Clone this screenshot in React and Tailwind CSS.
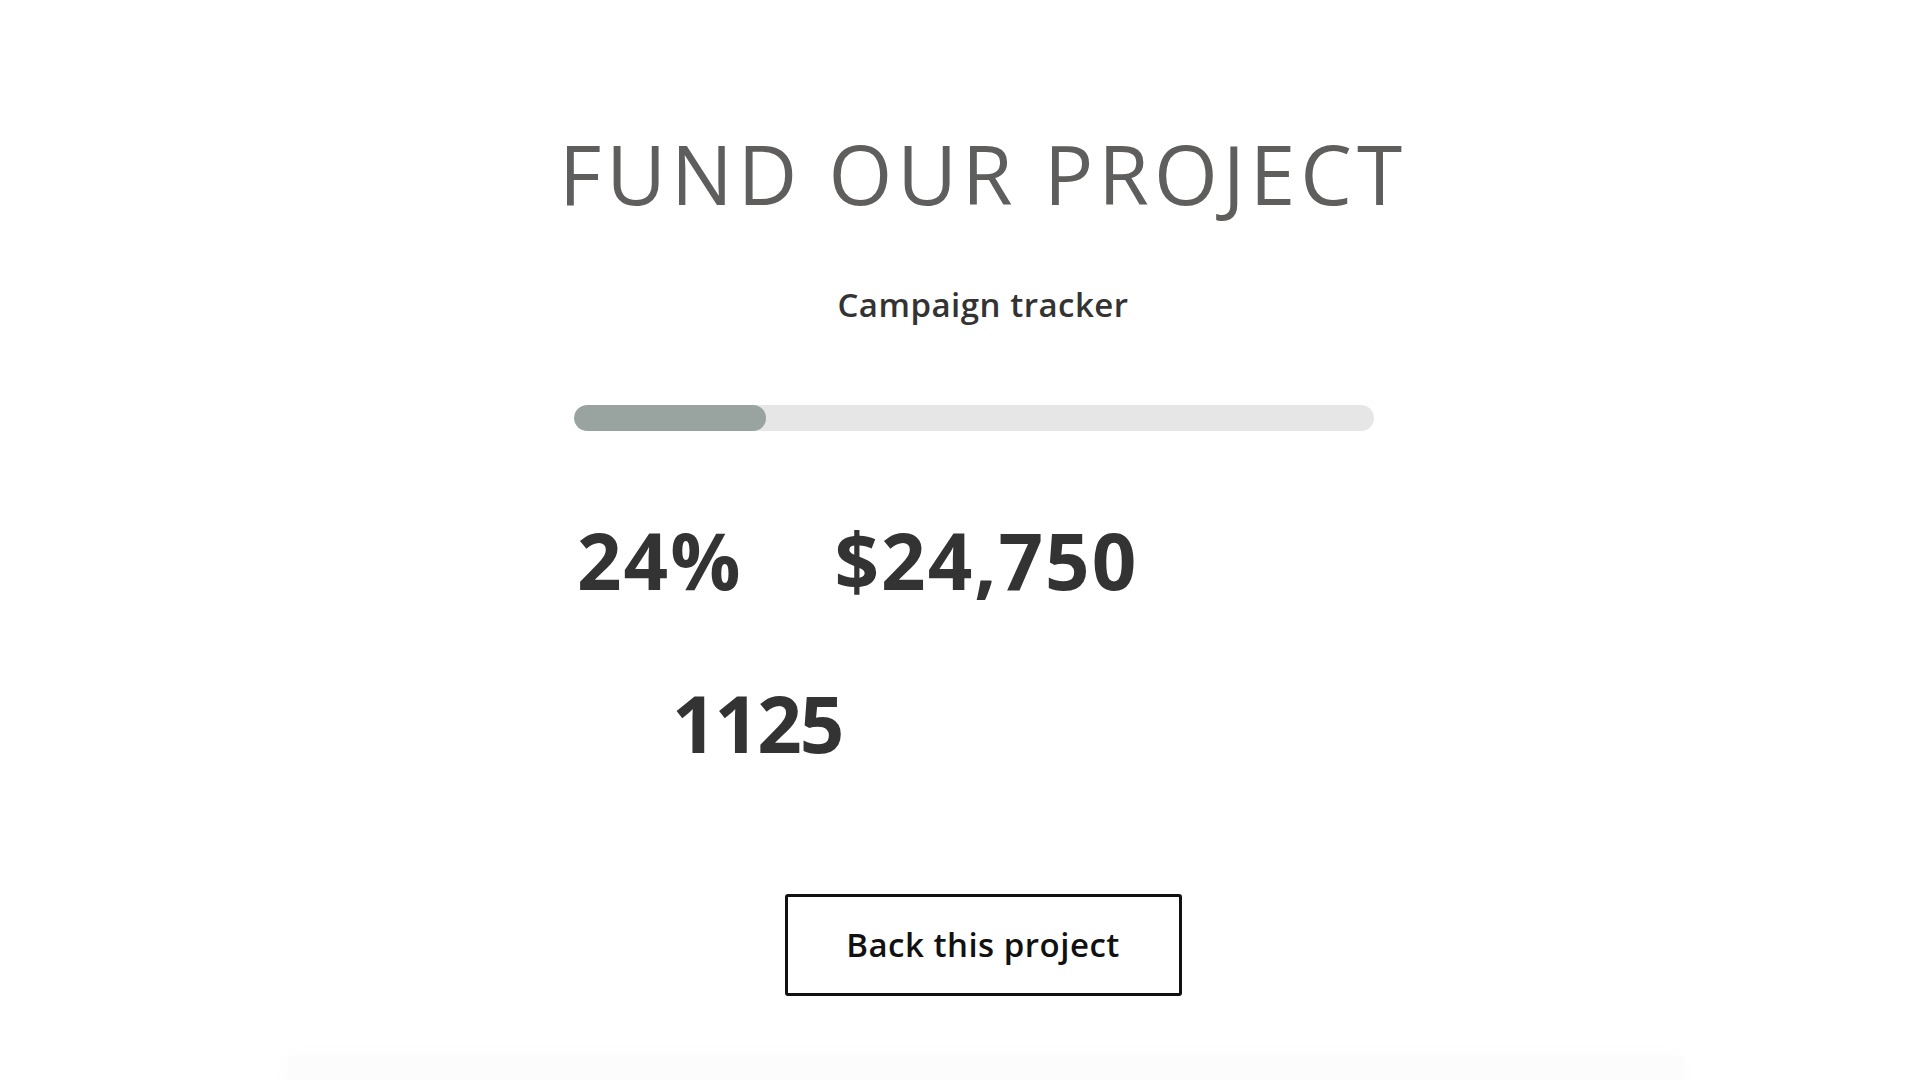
import React from 'react';

const stats = [
    { key: 'percent', value: '24%' },
    { key: 'raised', value: '$24,750' },
];

const ProgressBar = ({ percent }) => (
    <div className="w-[800px] h-[26px] rounded-full bg-[#e6e6e6] overflow-hidden">
        <div className="h-full rounded-full bg-[#99a39f]" style={{ width: `${percent}%` }}></div>
    </div>
);

const App = () => {
    return (
        <div
            className="min-h-screen bg-white flex flex-col items-center pl-[46px] overflow-hidden relative"
            style={{ fontFamily: '"Open Sans", "Liberation Sans", sans-serif' }}
        >
            <h1 className="mt-[128px] text-[82px] leading-[90px] tracking-[5px] text-[#5f5e5c] font-normal">
                FUND OUR PROJECT
            </h1>

            <p className="mt-[67px] text-[33px] leading-[40px] tracking-[0.5px] text-[#333333] font-semibold">
                Campaign tracker
            </p>

            <div className="mt-[80px] mr-[18px]">
                <ProgressBar percent={24} />
                <div className="mt-[84px] flex flex-col text-[#333333]">
                    <div className="flex gap-[92px] pl-[3px]">
                        {stats.map((stat) => (
                            <span key={stat.key} className="text-[78px] leading-[90px] tracking-[2px] font-bold">
                                {stat.value}
                            </span>
                        ))}
                    </div>
                    <div className="pl-[98px] mt-[73px]">
                        <span className="text-[78px] leading-[90px] tracking-[-2px] font-bold">1125</span>
                    </div>
                </div>
            </div>

            <button className="mt-[126px] w-[397px] h-[102px] border-[3px] border-[#111111] rounded-[3px] bg-white text-[33px] tracking-[0.5px] font-semibold text-[#111111]">
                Back this project
            </button>

            <div className="absolute bottom-[-40px] left-[288px] right-[237px] h-[64px] bg-[#fcfcfc] shadow-[0_0_20px_rgba(0,0,0,0.02)]"></div>
        </div>
    );
};

export default App;
